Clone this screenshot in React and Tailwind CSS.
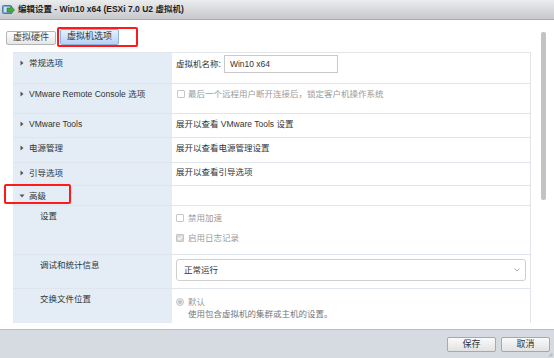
import React from "react";

const FONT = { fontFamily: '"Liberation Sans", "Noto Sans CJK SC", sans-serif' };

function Tri({ down }) {
  return down ? (
    <svg width="6" height="6" viewBox="0 0 6 6" className="shrink-0">
      <path d="M0.5 1.5 L5.5 1.5 L3 4.5 Z" fill="#555" />
    </svg>
  ) : (
    <svg width="6" height="6" viewBox="0 0 6 6" className="shrink-0">
      <path d="M1.5 0.5 L4.5 3 L1.5 5.5 Z" fill="#555" />
    </svg>
  );
}

function Row({ h, left, right, sub, down }) {
  return (
    <div className={`flex border-b border-[#dfe5eb] ${h}`}>
      <div className="w-[159px] shrink-0 bg-[#e4edf6] pt-[4px]">
        {sub ? (
          <div className="pl-[27px] leading-[12px] text-[#333]">{left}</div>
        ) : (
          <div className="flex items-center gap-[4px] pl-[6px] leading-[12px] text-[#333]">
            <Tri down={down} />
            <span>{left}</span>
          </div>
        )}
      </div>
      <div className="flex-1 min-w-0 bg-white">{right}</div>
    </div>
  );
}

function Box({ checked }) {
  return (
    <span
      className={`inline-flex h-[8px] w-[8px] shrink-0 items-center justify-center rounded-[1px] border ${
        checked ? "border-[#c4c4c4] bg-[#d9d9d9]" : "border-[#c8c8c8] bg-white"
      }`}
    >
      {checked && (
        <svg width="6" height="6" viewBox="0 0 6 6">
          <path d="M1 3 L2.5 4.5 L5 1.3" stroke="#fff" strokeWidth="1.1" fill="none" />
        </svg>
      )}
    </span>
  );
}

export default function App() {
  return (
    <div className="relative flex h-[358px] w-[554px] flex-col overflow-hidden bg-white text-[8.5px]" style={FONT}>
      {/* title bar */}
      <div className="flex h-[20px] shrink-0 items-center gap-[3px] border-b border-[#a9abae] bg-gradient-to-b from-[#ebecee] to-[#c6c8cb] pl-[2px]">
        <svg width="13" height="12" viewBox="0 0 13 12">
          <rect x="0.5" y="1.5" width="9" height="8" rx="1" fill="#7fa7d6" stroke="#4a78b0" />
          <rect x="2" y="3" width="6" height="5" fill="#cfe0f3" />
          <path d="M5 4 L9 4 L9 2 L12.5 6 L9 10 L9 8 L5 8 Z" fill="#3fae3f" stroke="#257a25" strokeWidth="0.6" />
        </svg>
        <span className="text-[8.5px] font-bold text-[#1e1e1e]">编辑设置 - Win10 x64 (ESXi 7.0 U2 虚拟机)</span>
      </div>

      {/* body */}
      <div className="flex min-h-0 flex-1">
        <div className="flex w-[531px] shrink-0 flex-col">
          {/* tabs */}
          <div className="flex h-[32px] shrink-0 items-start gap-[4px] pl-[6px] pt-[11px] text-[9px]">
            <div className="flex h-[14px] w-[50px] items-center justify-center rounded-[2px] border border-[#b4b4b4] bg-gradient-to-b from-white to-[#e6e6e6] text-[#444]">
              虚拟硬件
            </div>
            <div className="-mt-[2px] flex h-[16px] w-[59px] items-center justify-center rounded-[2px] border border-[#8fb1dc] bg-gradient-to-b from-[#e6f0fc] to-[#b8d2f2] text-[#333]">
              虚拟机选项
            </div>
          </div>

          {/* table */}
          <div className="ml-[13px] flex flex-col border-t border-r border-[#e2e6ea]">
            <Row
              h="h-[31px]"
              left="常规选项"
              right={
                <div className="flex items-center gap-[3px] pl-[4px] pt-[2px] text-[#333]">
                  <span>虚拟机名称:</span>
                  <div className="flex h-[18px] w-[114px] items-center border border-[#c9c9c9] pl-[5px]">Win10 x64</div>
                </div>
              }
            />
            <Row
              h="h-[30px]"
              left="VMware Remote Console 选项"
              right={
                <div className="flex items-center gap-[3px] pl-[5px] pt-[4px] leading-[12px] text-[#9a9a9a]">
                  <Box />
                  <span>最后一个远程用户断开连接后，锁定客户机操作系统</span>
                </div>
              }
            />
            <Row
              h="h-[24px]"
              left="VMware Tools"
              right={<div className="pl-[4px] pt-[4px] leading-[12px] text-[#333]">展开以查看 VMware Tools 设置</div>}
            />
            <Row
              h="h-[25px]"
              left="电源管理"
              right={<div className="pl-[4px] pt-[4px] leading-[12px] text-[#333]">展开以查看电源管理设置</div>}
            />
            <Row
              h="h-[23px]"
              left="引导选项"
              right={<div className="pl-[4px] pt-[3px] leading-[12px] text-[#333]">展开以查看引导选项</div>}
            />
            <Row h="h-[20px]" left="高级" down right={null} />
            <Row
              h="h-[49px]"
              sub
              left="设置"
              right={
                <div className="flex flex-col gap-[8px] pl-[4px] pt-[6px] leading-[12px] text-[#9a9a9a]">
                  <div className="flex items-center gap-[4px]">
                    <Box />
                    <span>禁用加速</span>
                  </div>
                  <div className="flex items-center gap-[4px]">
                    <Box checked />
                    <span>启用日志记录</span>
                  </div>
                </div>
              }
            />
            <Row
              h="h-[34px]"
              sub
              left="调试和统计信息"
              right={
                <div className="pl-[4px] pt-[4px]">
                  <div className="flex h-[22px] w-[350px] items-center justify-between rounded-[3px] border border-[#cfcfcf] pl-[7px] pr-[5px] text-[#333]">
                    <span>正常运行</span>
                    <svg width="6" height="4" viewBox="0 0 6 4">
                      <path d="M0.5 0.5 L3 3 L5.5 0.5" stroke="#999" strokeWidth="0.8" fill="none" />
                    </svg>
                  </div>
                </div>
              }
            />
            <Row
              h="h-[34px] border-b-0"
              sub
              left="交换文件位置"
              right={
                <div className="flex flex-col pl-[4px] pt-[7px] leading-[12px]">
                  <div className="flex items-center gap-[4px] text-[#999]">
                    <span className="flex h-[8px] w-[8px] items-center justify-center rounded-full border border-[#c8c8c8] bg-[#eee]">
                      <span className="h-[4px] w-[4px] rounded-full bg-[#c4c4c4]" />
                    </span>
                    <span>默认</span>
                  </div>
                  <div className="pl-[12px] text-[#777]">使用包含虚拟机的集群或主机的设置。</div>
                </div>
              }
            />
          </div>
        </div>
        {/* scrollbar */}
        <div className="ml-[10px] pt-[12px]">
          <div className="h-[168px] w-[5px] rounded-[2px] bg-[#c3c3c3]" />
        </div>
      </div>

      {/* footer */}
      <div className="relative flex h-[29px] shrink-0 items-start justify-end gap-[5px] border-t border-[#b9bdc2] bg-[#d6dbe1] pr-[4px] pt-[7px]">
        <button className="flex h-[15px] w-[49px] items-center justify-center rounded-[2px] border border-[#a8a8a8] bg-gradient-to-b from-[#fafafa] to-[#e2e2e2] text-[9px] text-[#333]">
          保存
        </button>
        <button className="flex h-[15px] w-[49px] items-center justify-center rounded-[2px] border border-[#a8a8a8] bg-gradient-to-b from-[#fafafa] to-[#e2e2e2] text-[9px] text-[#333]">
          取消
        </button>
        <svg className="absolute bottom-[1px] right-[1px]" width="5" height="5" viewBox="0 0 5 5">
          <path d="M4.5 1 L1 4.5 M4.5 3 L3 4.5" stroke="#8a8a8a" strokeWidth="0.7" />
        </svg>
      </div>

      {/* red annotation boxes */}
      <div className="pointer-events-none absolute left-[57px] top-[27px] h-[20px] w-[81px] rounded-[2px] border-2 border-[#ff1a1a]" />
      <div className="pointer-events-none absolute left-[4px] top-[184px] h-[20px] w-[67px] rounded-[2px] border-2 border-[#ff1a1a]" />
    </div>
  );
}
